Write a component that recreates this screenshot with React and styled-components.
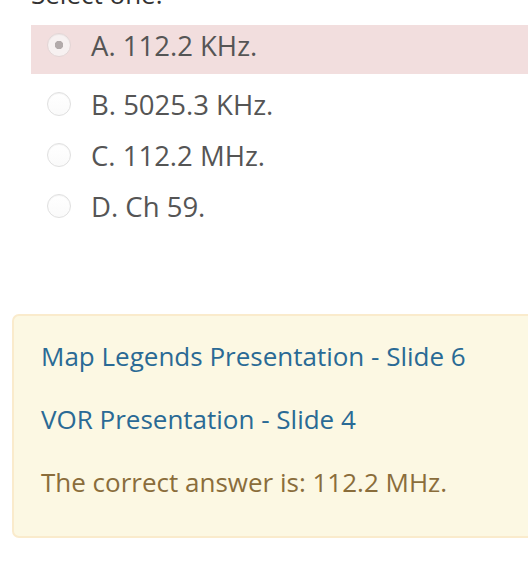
import React from "react";
import styled, { createGlobalStyle } from "styled-components";

const Global = createGlobalStyle`
  html, body {
    margin: 0;
    padding: 0;
    background: #ffffff;
    overflow: hidden;
  }
  body {
    font-family: "Open Sans", "Liberation Sans", sans-serif;
  }
`;

const Page = styled.div`
  width: 580px;
  display: flex;
  flex-direction: column;
  margin-top: -24px;
`;

const Prompt = styled.div`
  margin-left: 31px;
  font-size: 26px;
  line-height: 36px;
  color: #333333;
`;

const AnswerList = styled.div`
  margin: 13px 0 0 31px;
  display: flex;
  flex-direction: column;
  gap: 11px;
`;

const Row = styled.label`
  display: flex;
  align-items: center;
  gap: 20px;
  padding: ${(p) => (p.$highlight ? "1px 0 8px 16px" : "0 0 0 16px")};
  background: ${(p) => (p.$highlight ? "#f2dede" : "transparent")};
  font-size: 27.5px;
  line-height: 40px;
  color: #555555;
`;

const Radio = styled.span`
  width: 24px;
  height: 24px;
  box-sizing: border-box;
  border-radius: 50%;
  border: 1px solid ${(p) => (p.$checked ? "#e3d6d6" : "#e0e0e0")};
  background: ${(p) =>
    p.$checked
      ? "radial-gradient(circle, #b3abab 0 4px, #f7f1f1 4.5px)"
      : "linear-gradient(#ffffff, #fafafa)"};
  box-shadow: inset 0 1px 1px rgba(0, 0, 0, 0.05);
  flex: none;
  margin-top: -2px;
`;

const Feedback = styled.div`
  margin: 87px 0 0 12px;
  padding: 22px 27px 9px;
  background: #fcf8e3;
  border: 2px solid #faebcc;
  border-radius: 7px;
  font-size: 26px;
  line-height: 36px;
`;

const Para = styled.p`
  margin: 0 0 27px;
  color: ${(p) => (p.$tone === "link" ? "#2a6a95" : "#8a6d3b")};
`;

const answers = [
  { label: "A. 112.2 KHz.", checked: true },
  { label: "B. 5025.3 KHz." },
  { label: "C. 112.2 MHz." },
  { label: "D. Ch 59." },
];

export default function App() {
  return (
    <>
      <Global />
      <Page>
        <Prompt>Select one:</Prompt>
        <AnswerList>
          {answers.map((a) => (
            <Row key={a.label} $highlight={a.checked}>
              <Radio $checked={a.checked} />
              <span>{a.label}</span>
            </Row>
          ))}
        </AnswerList>
        <Feedback>
          <Para $tone="link">Map Legends Presentation - Slide 6</Para>
          <Para $tone="link">VOR Presentation - Slide 4</Para>
          <Para>The correct answer is: 112.2 MHz.</Para>
        </Feedback>
      </Page>
    </>
  );
}
